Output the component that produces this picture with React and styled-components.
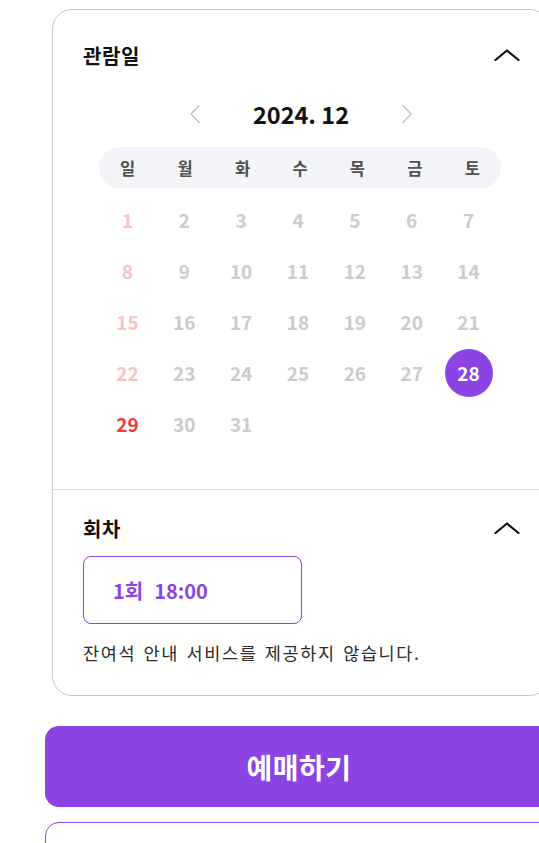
import React from 'react';
import styled, { createGlobalStyle } from 'styled-components';

const PURPLE = '#8b44e3';

const GlobalStyle = createGlobalStyle`
    body {
        margin: 0;
        background: #fff;
        overflow: hidden;
        font-family: "Noto Sans CJK KR", "Noto Sans", sans-serif;
    }
`;

const Page = styled.div`
    width: 508px;
    padding: 9px 0 0 45px;
`;

const Card = styled.div`
    width: 496px;
    margin-left: 7px;
    border: 1px solid #c6c6cc;
    border-radius: 20px;
    background: #fff;
`;

const Section = styled.section`
    padding: ${(p) => p.$pad};
    border-top: ${(p) => (p.$divider ? '1px solid #dcdce0' : 'none')};
`;

const SectionHead = styled.div`
    display: flex;
    align-items: center;
    justify-content: space-between;
    height: 26px;
`;

const SectionTitle = styled.h3`
    margin: 0;
    font-size: 20px;
    font-weight: 600;
    color: #111;
    letter-spacing: 0.6px;
`;

const Toggle = styled.button`
    background: transparent;
    border: none;
    padding: 0;
    display: flex;
    margin-right: -1px;
    cursor: pointer;
`;

const MonthNav = styled.div`
    display: flex;
    align-items: center;
    justify-content: center;
    gap: 50px;
    height: 30px;
    margin-top: 31px;
`;

const NavBtn = styled.button`
    background: transparent;
    border: none;
    padding: 0;
    display: flex;
`;

const MonthLabel = styled.span`
    font-size: 23.5px;
    font-weight: 700;
    color: #111;
    min-width: 100px;
    text-align: center;
`;

const WeekRow = styled.div`
    display: grid;
    grid-template-columns: repeat(7, 1fr);
    align-items: center;
    width: 402px;
    height: 41px;
    margin: 18px 0 0 16px;
    background: #f3f4f7;
    border-radius: 21px;
`;

const WeekDay = styled.span`
    text-align: center;
    font-size: 16.5px;
    font-weight: 700;
    color: #505050;
`;

const DayGrid = styled.div`
    display: grid;
    grid-template-columns: repeat(7, 1fr);
    grid-auto-rows: 51px;
    width: 398px;
    margin: 6px 0 0 16px;
`;

const DayCell = styled.div`
    display: flex;
    align-items: center;
    justify-content: center;
`;

const Day = styled.span`
    display: flex;
    align-items: center;
    justify-content: center;
    width: 48px;
    height: 48px;
    border-radius: 50%;
    font-size: 19px;
    font-weight: 700;
    color: ${(p) => p.$color};
    background: ${(p) => (p.$selected ? PURPLE : 'transparent')};
`;

const SessionBtn = styled.button`
    display: flex;
    align-items: center;
    gap: 11px;
    width: 219px;
    height: 68px;
    margin-top: 15px;
    padding: 0 0 0 29px;
    background: #fff;
    border: 1px solid ${PURPLE};
    border-radius: 8px;
    font-family: inherit;
    font-size: 20px;
    font-weight: 700;
    color: ${PURPLE};
`;

const Note = styled.p`
    margin: 18px 0 0;
    font-size: 17.5px;
    line-height: 22px;
    letter-spacing: 1.6px;
    word-spacing: 2px;
    color: #2a2a2a;
`;

const BookBtn = styled.button`
    display: block;
    width: 508px;
    height: 81px;
    margin-top: 30px;
    border: none;
    border-radius: 14px;
    background: ${PURPLE};
    color: #fff;
    font-family: inherit;
    font-size: 28px;
    font-weight: 700;
    letter-spacing: 0.5px;
`;

const SubBox = styled.div`
    width: 508px;
    height: 60px;
    margin-top: 15px;
    border: 1px solid ${PURPLE};
    border-radius: 14px;
    box-sizing: border-box;
`;

const ChevronUp = () => (
    <svg width="26" height="12" viewBox="0 0 26 12" fill="none">
        <polyline points="1.5,11 13,1.5 24.5,11" stroke="#111" strokeWidth="2.2" strokeLinecap="round" strokeLinejoin="round" />
    </svg>
);

const ChevronSide = ({ dir }) => (
    <svg width="12" height="20" viewBox="0 0 12 20" fill="none">
        <polyline
            points={dir === 'left' ? '10,1.5 2,10 10,18.5' : '2,1.5 10,10 2,18.5'}
            stroke="#c4c4c4"
            strokeWidth="1.6"
            strokeLinecap="round"
            strokeLinejoin="round"
        />
    </svg>
);

const WEEKDAYS = ['일', '월', '화', '수', '목', '금', '토'];
const SELECTED = 28;
const TODAY_SUNDAY = 29;

const dayColor = (d, i) => {
    if (d === SELECTED) return '#fff';
    if (d === TODAY_SUNDAY) return '#f23a3a';
    if (i % 7 === 0) return '#f4c4c4';
    return '#cbcbcb';
};

const App = () => {
    const days = Array.from({ length: 31 }, (_, i) => i + 1);

    return (
        <>
            <GlobalStyle />
            <Page>
                <Card>
                    <Section $pad="32px 30px 40px">
                        <SectionHead>
                            <SectionTitle>관람일</SectionTitle>
                            <Toggle><ChevronUp /></Toggle>
                        </SectionHead>
                        <MonthNav>
                            <NavBtn><ChevronSide dir="left" /></NavBtn>
                            <MonthLabel>2024. 12</MonthLabel>
                            <NavBtn><ChevronSide dir="right" /></NavBtn>
                        </MonthNav>
                        <WeekRow>
                            {WEEKDAYS.map((w) => (
                                <WeekDay key={w}>{w}</WeekDay>
                            ))}
                        </WeekRow>
                        <DayGrid>
                            {days.map((d, i) => (
                                <DayCell key={d}>
                                    <Day $color={dayColor(d, i)} $selected={d === SELECTED}>{d}</Day>
                                </DayCell>
                            ))}
                        </DayGrid>
                    </Section>
                    <Section $pad="25px 30px 31px" $divider>
                        <SectionHead>
                            <SectionTitle>회차</SectionTitle>
                            <Toggle><ChevronUp /></Toggle>
                        </SectionHead>
                        <SessionBtn>
                            <span>1회</span>
                            <span>18:00</span>
                        </SessionBtn>
                        <Note>잔여석 안내 서비스를 제공하지 않습니다.</Note>
                    </Section>
                </Card>
                <BookBtn>예매하기</BookBtn>
                <SubBox />
            </Page>
        </>
    );
};

export default App;
